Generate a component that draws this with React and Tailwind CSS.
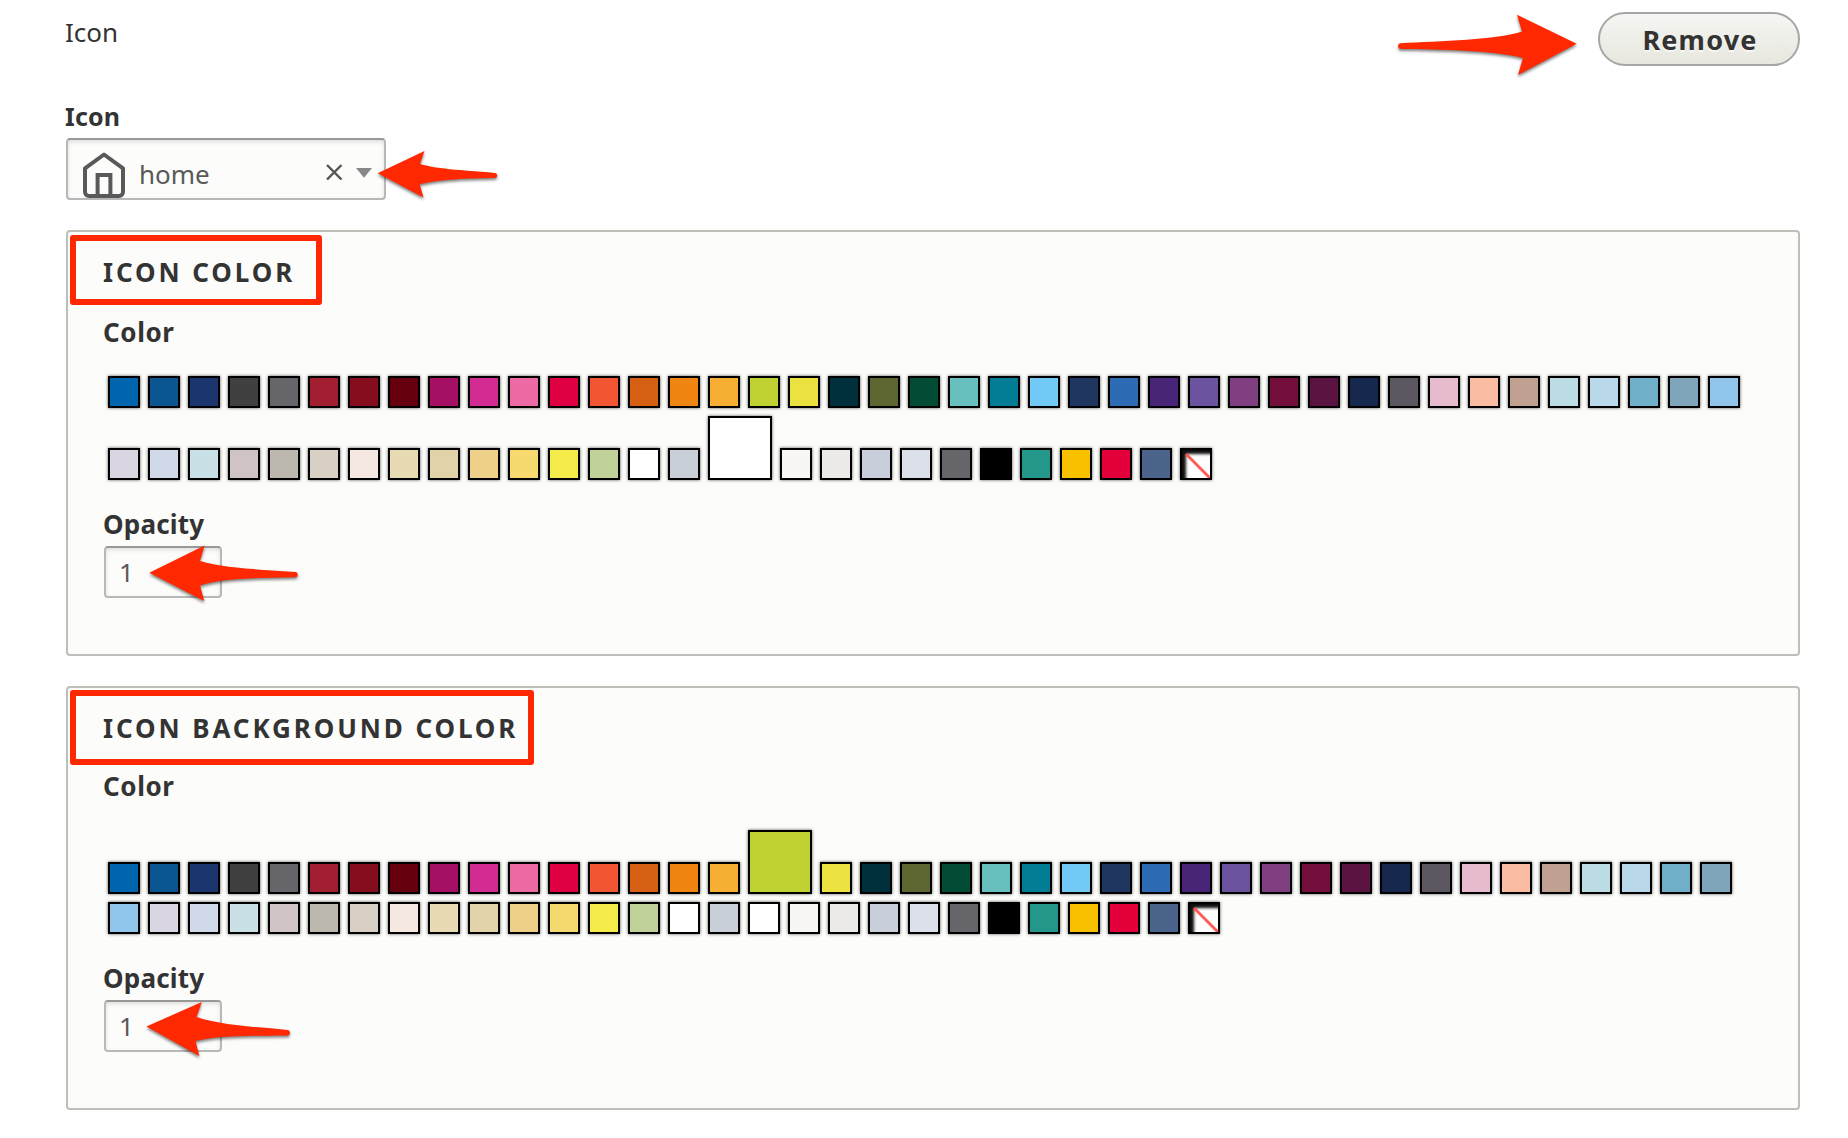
const PALETTE = [
  "#0065af", "#0b5591", "#1b366f", "#404040", "#66656a", "#a21f31", "#850d1d", "#66000e", "#a51064", "#d22b91",
  "#ec6ba5", "#de0043", "#f25532", "#d56013", "#f08611", "#f6ae33", "#c0d132", "#ebe23f", "#00303c", "#5d6631",
  "#024c36", "#67c0be", "#037c95", "#70caf5", "#1e3660", "#2d6cb5", "#482476", "#6b539f", "#7f3f81", "#740e3b",
  "#5b1341", "#17284f", "#5d5761", "#e7bbce", "#f9bca0", "#c0a090", "#bbdce5", "#b9d9eb", "#70afc8", "#7ea5ba",
  "#90c5ec", "#d9d6e1", "#d0d9e9", "#c9e0e7", "#cfc3c3", "#bcb8ad", "#d8d0c5", "#f5e8e0", "#e8dab2", "#e1d2aa",
  "#efd088", "#f6d96f", "#f5ec4c", "#c0d19a", "#ffffff", "#c8cfd7", "#ffffff", "#f8f7f4", "#ebeae7", "#c8ceda",
  "#dce0e9", "#66656a", "#000000", "#22978a", "#f9c000", "#e4003a", "#4b648b",
];

const swatchBase =
  "m-1 shrink-0 border-2 border-black shadow-[0_0_3px_rgba(0,0,0,0.65)]";

function Swatches({ selected }) {
  return (
    <div className="flex w-[1664px] flex-wrap items-end">
      {PALETTE.map((color, i) => (
        <button
          key={i}
          aria-label={color}
          className={`${swatchBase} ${i === selected ? "size-16" : "size-8"}`}
          style={{ backgroundColor: color }}
        />
      ))}
      <button aria-label="none" className={`${swatchBase} relative size-8 bg-white`}>
        <span className="absolute inset-0 shadow-[inset_4px_4px_3px_rgba(0,0,0,0.95)]" />
        <svg className="absolute inset-0 size-7" viewBox="0 0 28 28">
          <path d="M4 4 28 28" stroke="#ff4a44" strokeOpacity="0.9" strokeWidth="3" />
        </svg>
      </button>
    </div>
  );
}

function Label({ children, className = "" }) {
  return (
    <div className={`-ml-px h-10 font-bold leading-10 whitespace-nowrap ${className}`}>{children}</div>
  );
}

const fieldBox =
  "rounded-[4px] border-2 border-[#b8b8b8] border-t-[#999] bg-[#fcfcfa] text-[#595959] shadow-[inset_0_2px_4px_rgba(0,0,0,0.12)]";

function Panel({ title, selected, className, frame, labelGap }) {
  return (
    <section className={`relative rounded-[4px] border-2 border-[#bfbfba] bg-[#fcfcfa] px-9 pt-5 ${className}`}>
      <h2 className="-ml-px h-10 leading-10 font-bold tracking-[2.9px] whitespace-nowrap">{title}</h2>
      <div className={`absolute left-[2px] rounded-[3px] border-[6px] border-[#ff2800] ${frame}`} />
      <Label className={`tracking-[0.6px] ${labelGap}`}>Color</Label>
      <div className="mt-5">
        <Swatches selected={selected} />
      </div>
      <Label className="mt-5 tracking-[0.2px]">Opacity</Label>
      <div className={`mt-[2px] flex h-[52px] w-[118px] items-center pl-[13px] ${fieldBox}`}>1</div>
    </section>
  );
}

const ARROWS = [
  "M1576.7 43.7 1517 14.8 1522 31.5C1498 40 1440 41 1400.5 43.2 1397.3 43.5 1397.3 48.7 1400.5 49 1440 49.5 1490 50 1523 58L1518 75Z",
  "M377.7 173.3 424.5 151 420 164C438 169.5 470 170.5 495 173 498 173.5 498 177.5 495 178 470 178.5 438 179 419.7 184.5L423.5 197.5Z",
  "M149.3 572.7 204.6 545.5 200 561C225 568.5 262 569.5 295.5 572 298.5 572.5 298.5 577 295.5 577.3 262 578 222 577.5 200 585.5L204.3 601Z",
  "M146.5 1026.5 201.8 1002 196.5 1017C222 1025.5 258 1027 287.5 1030 290.8 1030.5 290.8 1035 287.5 1035.5 258 1036 222 1034.5 195.5 1041L199.3 1056Z",
];

export default function App() {
  return (
    <main className="relative h-[1138px] w-[1848px] overflow-hidden bg-white pt-3 pr-12 pl-[66px] font-['Noto_Sans','Open_Sans',sans-serif] text-[26px] text-[#333]">
      <header className="flex h-[84px] items-start justify-between">
        <span className="-ml-px h-10 leading-10">Icon</span>
        <button className="h-[54px] w-[202px] rounded-full border-2 border-[#a6a6a6] bg-linear-to-b from-[#f6f6f3] to-[#e7e7df] pt-px pl-[2px] text-[27px] leading-10 font-bold tracking-[1.2px] [text-shadow:0_2px_0_rgba(255,255,255,0.6)]">
          Remove
        </button>
      </header>

      <Label className="text-[25px] tracking-[0.2px]">Icon</Label>
      <div className={`mt-[2px] flex h-[62px] w-80 items-start ${fieldBox}`}>
        <svg className="mt-3 ml-[15px] h-[46px] w-[42px]" viewBox="83 152 42 46" fill="none" stroke="#595959" strokeWidth="4">
          <path d="M104 154.5 85 168.3V192a4 4 0 0 0 4 4h30a4 4 0 0 0 4-4V168.3Z" strokeLinejoin="round" />
          <path d="M97.6 196V175h12.8v21" />
        </svg>
        <span className="mt-[14px] ml-[14px] h-10 leading-10">home</span>
        <svg className="mt-[24px] mr-3 ml-auto h-4 w-[46px]" viewBox="0 0 46 16">
          <path d="M1 1 15.5 15.5M15.5 1 1 15.5" stroke="#555" strokeWidth="2.4" />
          <path d="M30 4h16L38 13.7Z" fill="#888" />
        </svg>
      </div>

      <Panel
        title="ICON COLOR"
        selected={56}
        className="mt-[30px] h-[426px]"
        frame="top-[3px] h-[70px] w-[252px]"
        labelGap="mt-5"
      />
      <Panel
        title="ICON BACKGROUND COLOR"
        selected={16}
        className="mt-[30px] h-[424px]"
        frame="top-[2px] h-[75px] w-[464px]"
        labelGap="mt-[18px]"
      />

      <svg className="pointer-events-none absolute inset-0 h-full w-full drop-shadow-[0_2px_1.5px_rgba(0,0,0,0.5)]" viewBox="0 0 1848 1138" fill="#ff2800">
        {ARROWS.map((d) => (
          <path key={d} d={d} />
        ))}
      </svg>
    </main>
  );
}
